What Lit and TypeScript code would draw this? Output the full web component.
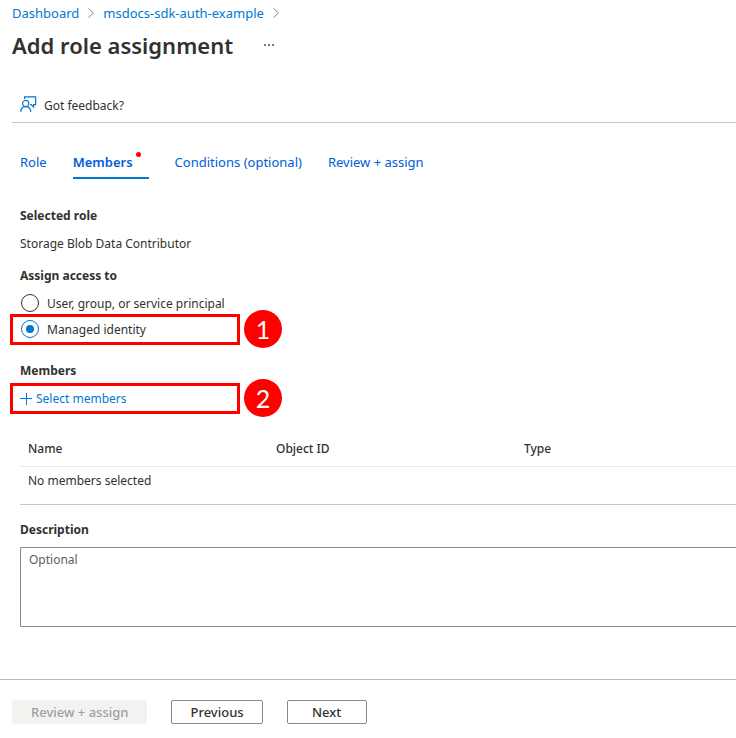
import { LitElement, html, css } from "lit";
import { customElement, state } from "lit/decorators.js";
import { classMap } from "lit/directives/class-map.js";

const chevron = html`<svg viewBox="0 0 8 12" width="8" height="12" aria-hidden="true">
  <path d="M1.5 1.5 6.5 6 1.5 10.5" fill="none" stroke="#8a8886" stroke-width="1"/></svg>`;

const feedbackIcon = html`<svg viewBox="0 0 17 17" width="17" height="17" aria-hidden="true">
  <g fill="none" stroke="#0078d4" stroke-width="1.2">
    <path d="M4.6 3V.8H15.6V8.6H13.6V11L11.2 8.6H10"/>
    <circle cx="5.7" cy="7.5" r="3.1"/>
    <path d="M.7 16C.9 12.7 2.8 10.7 5.7 10.7S10.6 12.7 10.8 16"/>
  </g></svg>`;

const plusIcon = html`<svg viewBox="0 0 12 12" width="12" height="12" aria-hidden="true">
  <path d="M6.5 0V12M0 5.5H12" fill="none" stroke="#0078d4" stroke-width="1"/></svg>`;

interface Tab {
  label: string;
  flagged?: boolean;
}

const TABS: Tab[] = [
  { label: "Role" },
  { label: "Members", flagged: true },
  { label: "Conditions (optional)" },
  { label: "Review + assign" },
];

@customElement("app-root")
export class AppRoot extends LitElement {
  @state() private tab = "Members";
  @state() private access = "identity";

  static styles = css`
    :host {
      display: block;
      overflow: hidden;
      background: #fff;
      color: #323130;
      font: 12px/20px "Noto Sans", "Open Sans", sans-serif;
    }
    * { box-sizing: border-box; }
    h1, h2, p { margin: 0; }
    a { color: #0078d4; text-decoration: none; }
    button, textarea, input { font: inherit; margin: 0; }
    svg { display: block; flex: none; }
    .crumbs {
      display: flex;
      align-items: center;
      gap: 8px;
      padding: 3px 12px 0;
      font-size: 13px;
    }
    .title-row {
      display: flex;
      align-items: center;
      gap: 30px;
      padding: 5px 12px 0;
    }
    h1 { font-size: 22px; line-height: 34px; font-weight: 600; }
    .plain {
      padding: 0;
      border: 0;
      background: none;
      color: inherit;
      cursor: pointer;
    }
    .toolbar {
      margin: 25px 0 0 12px;
      padding: 9px 8px 6px;
      border-bottom: 1px solid #c8c6c4;
    }
    .feedback { display: flex; align-items: flex-start; gap: 7px; }
    .tabs {
      display: flex;
      gap: 26px;
      margin: 29px 20px 0;
      font-size: 13px;
    }
    .tab {
      padding: 0 0 5px;
      border: 0;
      border-bottom: 2px solid transparent;
      background: none;
      color: #015cda;
      cursor: pointer;
      white-space: nowrap;
    }
    .tab.active { border-color: #0078d4; font-weight: 600; }
    .tab.flagged { position: relative; padding-right: 16px; }
    .dot {
      position: absolute;
      top: 0;
      right: 8px;
      width: 5px;
      height: 5px;
      border-radius: 50%;
      background: #f00;
    }
    .content { padding: 27px 0 52px 20px; }
    h2, .label, legend {
      display: block;
      padding: 0;
      font-size: 12px;
      line-height: 20px;
      font-weight: 700;
    }
    .value { margin: 8px 0 12px; }
    fieldset { margin: 0; padding: 0; border: 0; }
    .radios { display: grid; gap: 6px; padding: 8px 0 21px; }
    .step { position: relative; }
    .radio { display: flex; align-items: flex-start; gap: 8px; padding-left: 1px; }
    .radio input {
      appearance: none;
      display: grid;
      place-items: center;
      width: 18px;
      height: 18px;
      border: 1px solid #323130;
      border-radius: 50%;
    }
    .radio input:checked { border-color: #0078d4; }
    .radio input:checked::before {
      content: "";
      width: 8px;
      height: 8px;
      border-radius: 50%;
      background: #0078d4;
    }
    .select { margin-top: 8px; }
    .select button { display: flex; align-items: center; gap: 4px; color: #0078d4; }
    .mark {
      position: absolute;
      inset: -6px auto -5px -10px;
      width: 230px;
      border: 3px solid #f00;
      pointer-events: none;
    }
    .badge {
      position: absolute;
      top: -10px;
      left: 224px;
      width: 38px;
      height: 38px;
      border-radius: 50%;
      background: #f00;
      color: #fff;
      font-family: Lato, sans-serif;
      font-size: 25px;
      line-height: 38px;
      text-align: center;
    }
    table {
      width: 100%;
      margin: 21px 0 15px;
      border-collapse: separate;
      border-spacing: 0;
      table-layout: fixed;
      text-align: left;
    }
    .col { width: 248px; }
    th { padding: 9px 8px 7px; border-bottom: 1px solid #edebe9; font-weight: 500; }
    td { padding: 4px 8px 13px; border-bottom: 1px solid #c8c6c4; }
    textarea {
      display: block;
      width: 100%;
      height: 80px;
      margin-top: 7px;
      padding: 2px 8px;
      border: 1px solid #8a8886;
      border-right: 0;
      border-radius: 2px 0 0 2px;
      color: inherit;
      resize: none;
    }
    textarea::placeholder { color: #605e5c; opacity: 1; }
    footer {
      display: flex;
      gap: 24px;
      padding: 20px 12px 14px;
      border-top: 1px solid #bab8b7;
    }
    .btn {
      min-width: 80px;
      height: 24px;
      padding: 0 18px;
      border: 1px solid #8a8886;
      border-radius: 2px;
      background: #fff;
      color: #323130;
      font-size: 13px;
      line-height: 20px;
      font-weight: 500;
      white-space: nowrap;
    }
    .btn:disabled { border-color: #f3f2f1; background: #f3f2f1; color: #a19f9d; }
  `;

  private radio(value: string, label: string) {
    return html`<label class="radio">
      <input type="radio" name="access" value=${value} .checked=${this.access === value}
        @change=${() => (this.access = value)} />
      ${label}
    </label>`;
  }

  render() {
    return html`
      <nav class="crumbs" aria-label="Breadcrumb">
        <a href="#dashboard">Dashboard</a>${chevron}
        <a href="#example">msdocs-sdk-auth-example</a>${chevron}
      </nav>
      <header class="title-row">
        <h1>Add role assignment</h1>
        <button class="plain" aria-label="More actions">⋯</button>
      </header>
      <div class="toolbar">
        <button class="plain feedback">${feedbackIcon}<span>Got feedback?</span></button>
      </div>
      <div class="tabs" role="tablist">
        ${TABS.map(
          (t) => html`<button role="tab" aria-selected=${this.tab === t.label}
            class=${classMap({ tab: true, active: this.tab === t.label, flagged: !!t.flagged })}
            @click=${() => (this.tab = t.label)}>${t.label}${t.flagged ? html`<span class="dot"></span>` : ""}</button>`
        )}
      </div>
      <main class="content">
        <h2>Selected role</h2>
        <p class="value">Storage Blob Data Contributor</p>
        <fieldset>
          <legend>Assign access to</legend>
          <div class="radios">
            ${this.radio("user", "User, group, or service principal")}
            <div class="step">
              ${this.radio("identity", "Managed identity")}
              <span class="mark"></span><span class="badge">1</span>
            </div>
          </div>
        </fieldset>
        <h2>Members</h2>
        <div class="step select">
          <button class="plain">${plusIcon}Select members</button>
          <span class="mark"></span><span class="badge">2</span>
        </div>
        <table>
          <colgroup><col class="col" /><col class="col" /><col /></colgroup>
          <thead><tr><th>Name</th><th>Object ID</th><th>Type</th></tr></thead>
          <tbody><tr><td colspan="3">No members selected</td></tr></tbody>
        </table>
        <label class="label" for="description">Description</label>
        <textarea id="description" placeholder="Optional"></textarea>
      </main>
      <footer>
        <button class="btn" disabled>Review + assign</button>
        <button class="btn">Previous</button>
        <button class="btn">Next</button>
      </footer>
    `;
  }
}
